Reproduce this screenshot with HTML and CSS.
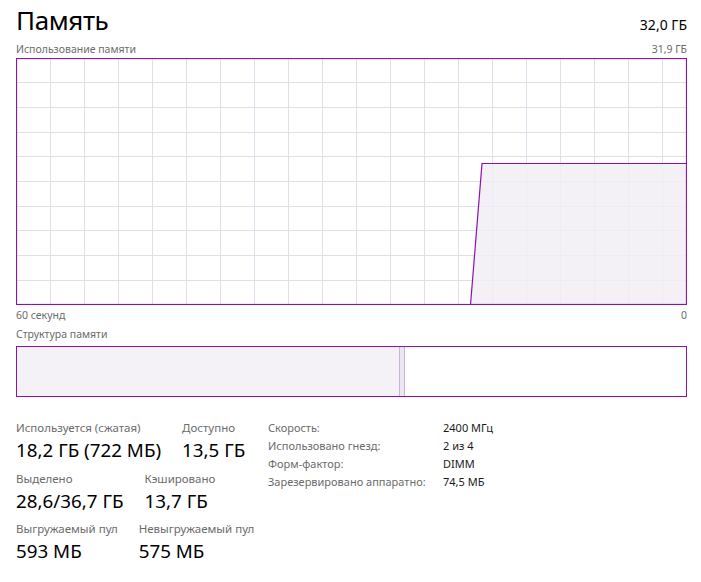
FILE: index.html
```html
<!DOCTYPE html>
<html lang="ru">
<head>
  <meta charset="UTF-8">
  <title>Память</title>
  <link rel="stylesheet" href="styles.css">
</head>
<body>
  <main class="page">
    <header class="head">
      <h1>Память</h1>
      <span class="total">32,0 ГБ</span>
    </header>
    <div class="caption">
      <span>Использование памяти</span>
      <span>31,9 ГБ</span>
    </div>
    <div class="chart">
      <svg width="671" height="247" viewBox="0 0 671 247">
        <g stroke="#e4dde9" stroke-width="1">
          <path d="M34.5 0V247M68.5 0V247M102.5 0V247M136.5 0V247M170.5 0V247M204.5 0V247M238.5 0V247M272.5 0V247M306.5 0V247M340.5 0V247M374.5 0V247M408.5 0V247M442.5 0V247M476.5 0V247M510.5 0V247M544.5 0V247M578.5 0V247M612.5 0V247M646.5 0V247"/>
          <path d="M0 24.5H671M0 49.5H671M0 74.5H671M0 98.5H671M0 123.5H671M0 148.5H671M0 172.5H671M0 197.5H671M0 222.5H671"/>
        </g>
        <polygon points="454.5,247 466,105.5 671,105.5 671,247" fill="#f1edf5" fill-opacity="0.85"/>
        <polyline points="454.5,247 466,105.5 671,105.5" fill="none" stroke="#8b12ae" stroke-width="1.2"/>
        <rect x="0.5" y="0.5" width="670" height="246" fill="none" stroke="#8b12ae" stroke-width="1.2"/>
      </svg>
    </div>
    <div class="caption axis">
      <span>60 секунд</span>
      <span>0</span>
    </div>
    <div class="caption struct">
      <span>Структура памяти</span>
    </div>
    <div class="bar">
      <div class="seg used"></div>
      <div class="seg modified"></div>
      <div class="seg free"></div>
    </div>
    <section class="stats">
      <div class="main-stats">
        <div class="row">
          <div class="cell"><span class="label">Используется (сжатая)</span><span class="value">18,2 ГБ (722 МБ)</span></div>
          <div class="cell"><span class="label">Доступно</span><span class="value">13,5 ГБ</span></div>
        </div>
        <div class="row">
          <div class="cell"><span class="label">Выделено</span><span class="value">28,6/36,7 ГБ</span></div>
          <div class="cell"><span class="label">Кэшировано</span><span class="value">13,7 ГБ</span></div>
        </div>
        <div class="row">
          <div class="cell"><span class="label">Выгружаемый пул</span><span class="value">593 МБ</span></div>
          <div class="cell"><span class="label">Невыгружаемый пул</span><span class="value">575 МБ</span></div>
        </div>
      </div>
      <dl class="info">
        <dt>Скорость:</dt><dd>2400 МГц</dd>
        <dt>Использовано гнезд:</dt><dd>2 из 4</dd>
        <dt>Форм-фактор:</dt><dd>DIMM</dd>
        <dt>Зарезервировано аппаратно:</dt><dd>74,5 МБ</dd>
      </dl>
    </section>
  </main>
</body>
</html>
```

FILE: styles.css
```css
body {
  margin: 0;
  background: #fff;
  color: #000;
  font-family: "Segoe UI", "Noto Sans", "Open Sans", sans-serif;
}
.page {
  width: 671px;
  padding: 0 14px 0 16px;
}
.head {
  display: flex;
  justify-content: space-between;
  align-items: baseline;
  height: 40px;
}
.head h1 {
  margin: 0;
  font-size: 26px;
  font-weight: 400;
  line-height: 40px;
  letter-spacing: -0.4px;
}
.total {
  font-size: 14px;
}
.caption {
  display: flex;
  justify-content: space-between;
  font-size: 10.5px;
  color: #6b6b6b;
  line-height: 18px;
}
.chart {
  height: 247px;
}
.chart svg {
  display: block;
}
.axis {
  margin-top: 1px;
}
.struct {
  margin-top: 1px;
  height: 21px;
}
.bar {
  display: flex;
  height: 49px;
  border: 1.2px solid #8b12ae;
}
.seg.used {
  width: 382px;
  background: #f4f1f7;
  border-right: 1px solid #cbb2d8;
}
.seg.modified {
  width: 4px;
  background: #ede5f1;
  border-right: 1px solid #cbb2d8;
}
.seg.free {
  flex: 1;
  background: #fff;
}
.stats {
  display: flex;
  align-items: flex-start;
  margin-top: 22px;
}
.main-stats {
  width: 252px;
}
.row {
  display: flex;
  gap: 21px;
  height: 50.5px;
}
.cell {
  display: flex;
  flex-direction: column;
}
.label {
  font-size: 11.5px;
  color: #6b6b6b;
  line-height: 18px;
}
.value {
  font-size: 18.8px;
  line-height: 26px;
}
.info {
  display: grid;
  grid-template-columns: 175px auto;
  margin: 0;
  font-size: 11px;
  line-height: 18px;
}
.info dt {
  color: #6b6b6b;
}
.info dd {
  margin: 0;
  color: #1a1a1a;
}
```
